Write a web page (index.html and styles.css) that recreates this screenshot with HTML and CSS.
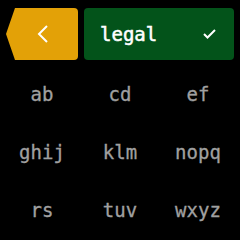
FILE: index.html
```html
<!DOCTYPE html>
<html lang="en">

<head>
    <meta charset="UTF-8">
    <title>keypad</title>
    <link rel="stylesheet" href="styles.css">
</head>

<body>
    <div class="top">
        <div class="back">
            <svg width="16" height="20" viewBox="0 0 16 20">
                <polyline points="12,2 4,10 12,18" fill="none" stroke="#fff" stroke-width="2" />
            </svg>
        </div>
        <div class="word">
            <span>legal</span>
            <svg width="14" height="12" viewBox="0 0 14 12">
                <polyline points="1,6 4.5,9.5 12,2" fill="none" stroke="#fff" stroke-width="2" />
            </svg>
        </div>
    </div>
    <div class="keys">
        <div class="key">ab</div>
        <div class="key">cd</div>
        <div class="key">ef</div>
        <div class="key">ghij</div>
        <div class="key">klm</div>
        <div class="key">nopq</div>
        <div class="key">rs</div>
        <div class="key">tuv</div>
        <div class="key">wxyz</div>
    </div>
</body>

</html>
```

FILE: styles.css
```css
* {
    padding: 0;
    margin: 0;
}

body {
    width: 240px;
    height: 240px;
    background-color: #000;
    font-family: 'DejaVu Sans Mono', monospace;
}

.top {
    display: flex;
    gap: 6px;
    padding: 8px 6px 0;
    height: 52px;
}

.back {
    width: 72px;
    height: 52px;
    background-color: #e3a107;
    border-radius: 4px;
    clip-path: polygon(9px 0, 100% 0, 100% 100%, 9px 100%, 0 50%);
    display: flex;
    align-items: center;
    justify-content: center;
    padding-left: 2px;
    box-sizing: border-box;
}

.back svg {
    display: block;
}

.word {
    flex: 1;
    height: 52px;
    background-color: #03531a;
    border-radius: 4px;
    display: flex;
    align-items: center;
    justify-content: space-between;
    padding: 0 17px 0 16px;
    color: #fff;
    font-size: 19px;
    -webkit-text-stroke: 0.5px #fff;
}

.word svg {
    display: block;
}

.keys {
    display: grid;
    grid-template-columns: repeat(3, 78px);
    grid-auto-rows: 58px;
    padding: 5px 3px 0;
}

.key {
    display: flex;
    align-items: center;
    justify-content: center;
    color: #a0a0a0;
    font-size: 19px;
    -webkit-text-stroke: 0.3px #a0a0a0;
}
```
